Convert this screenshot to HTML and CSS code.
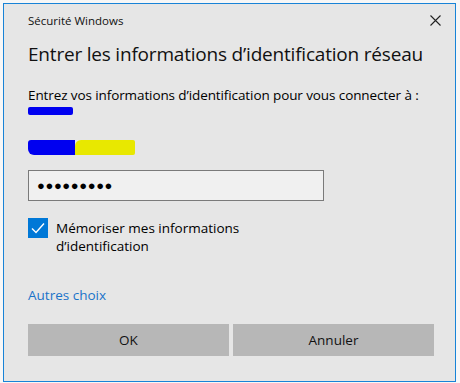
FILE: index.html
```html
<!DOCTYPE html>
<html lang="fr">
<head>
  <meta charset="UTF-8">
  <title>Sécurité Windows</title>
  <link rel="stylesheet" href="styles.css">
</head>
<body>

  <div class="dialog">
    <div class="title-bar">
      <span class="title">Sécurité Windows</span>
      <svg class="close" width="11" height="11" viewBox="0 0 11 11">
        <path d="M0.5 0.5 L10.5 10.5 M10.5 0.5 L0.5 10.5" stroke="#222" stroke-width="1.1" fill="none"/>
      </svg>
    </div>

    <div class="content">
      <h1>Entrer les informations d’identification réseau</h1>
      <p class="intro">Entrez vos informations d’identification pour vous connecter à :</p>
      <div class="scribble scribble-host"></div>

      <div class="user">
        <span class="scribble scribble-blue"></span>
        <span class="scribble scribble-yellow"></span>
      </div>

      <div class="password">●●●●●●●●●</div>

      <label class="remember">
        <span class="checkbox">
          <svg width="20" height="20" viewBox="0 0 20 20">
            <path d="M4 10.5 L8 14.5 L16 5.5" stroke="#fff" stroke-width="1.4" fill="none"/>
          </svg>
        </span>
        <span class="remember-text">Mémoriser mes informations<br>d’identification</span>
      </label>

      <a href="#" class="more">Autres choix</a>

      <div class="buttons">
        <button class="btn">OK</button>
        <button class="btn">Annuler</button>
      </div>
    </div>
  </div>

</body>
</html>
```

FILE: styles.css
```css
* {
  margin: 0;
  padding: 0;
  box-sizing: border-box;
}

body {
  background-color: #f7f7f7;
  font-family: 'Open Sans', 'Noto Sans', sans-serif;
  color: #000;
}

.dialog {
  margin: 3px 0 0 3px;
  width: 453px;
  height: 379px;
  border: 1px solid #1883d7;
  background-color: #e6e6e6;
}

.title-bar {
  display: flex;
  justify-content: space-between;
  align-items: center;
  padding: 6px 14px 0 24px;
  height: 26px;
}

.title {
  font-size: 11.5px;
  color: #111;
}

.content {
  padding: 0 20px 0 24px;
}

h1 {
  font-size: 19px;
  font-weight: 400;
  color: #111;
  margin-top: 11px;
  letter-spacing: -0.2px;
  white-space: nowrap;
}

.intro {
  font-size: 13.5px;
  margin-top: 19px;
  letter-spacing: -0.1px;
  white-space: nowrap;
}

.scribble {
  display: block;
  border-radius: 2px;
}

.scribble-host {
  width: 45px;
  height: 8px;
  margin-top: 3px;
  background-color: #0000f0;
}

.user {
  display: flex;
  margin-top: 25px;
}

.scribble-blue {
  width: 47px;
  height: 15px;
  background-color: #0000f0;
  border-radius: 3px 0 0 6px;
}

.scribble-yellow {
  width: 60px;
  height: 15px;
  background-color: #e8e800;
  border-radius: 6px 2px 2px 0;
}

.password {
  width: 296px;
  height: 31px;
  margin-top: 15px;
  padding: 0 8px;
  border: 1px solid #7a7a7a;
  background-color: #f0f0f0;
  font-size: 13px;
  line-height: 29px;
  letter-spacing: 0.6px;
}

.remember {
  display: flex;
  align-items: flex-start;
  margin-top: 17px;
  font-size: 13.5px;
  line-height: 18px;
}

.checkbox {
  display: block;
  width: 20px;
  height: 20px;
  background-color: #0078d7;
  margin-right: 8px;
}

.remember-text {
  margin-top: 1px;
}

.more {
  display: block;
  margin-top: 31px;
  font-size: 13.5px;
  color: #1a73c9;
  text-decoration: none;
}

.buttons {
  display: flex;
  gap: 4px;
  margin-top: 20px;
  width: 406px;
}

.btn {
  flex: 1;
  height: 32px;
  border: none;
  background-color: #b7b7b7;
  font-family: inherit;
  font-size: 13.5px;
  color: #111;
}
```
